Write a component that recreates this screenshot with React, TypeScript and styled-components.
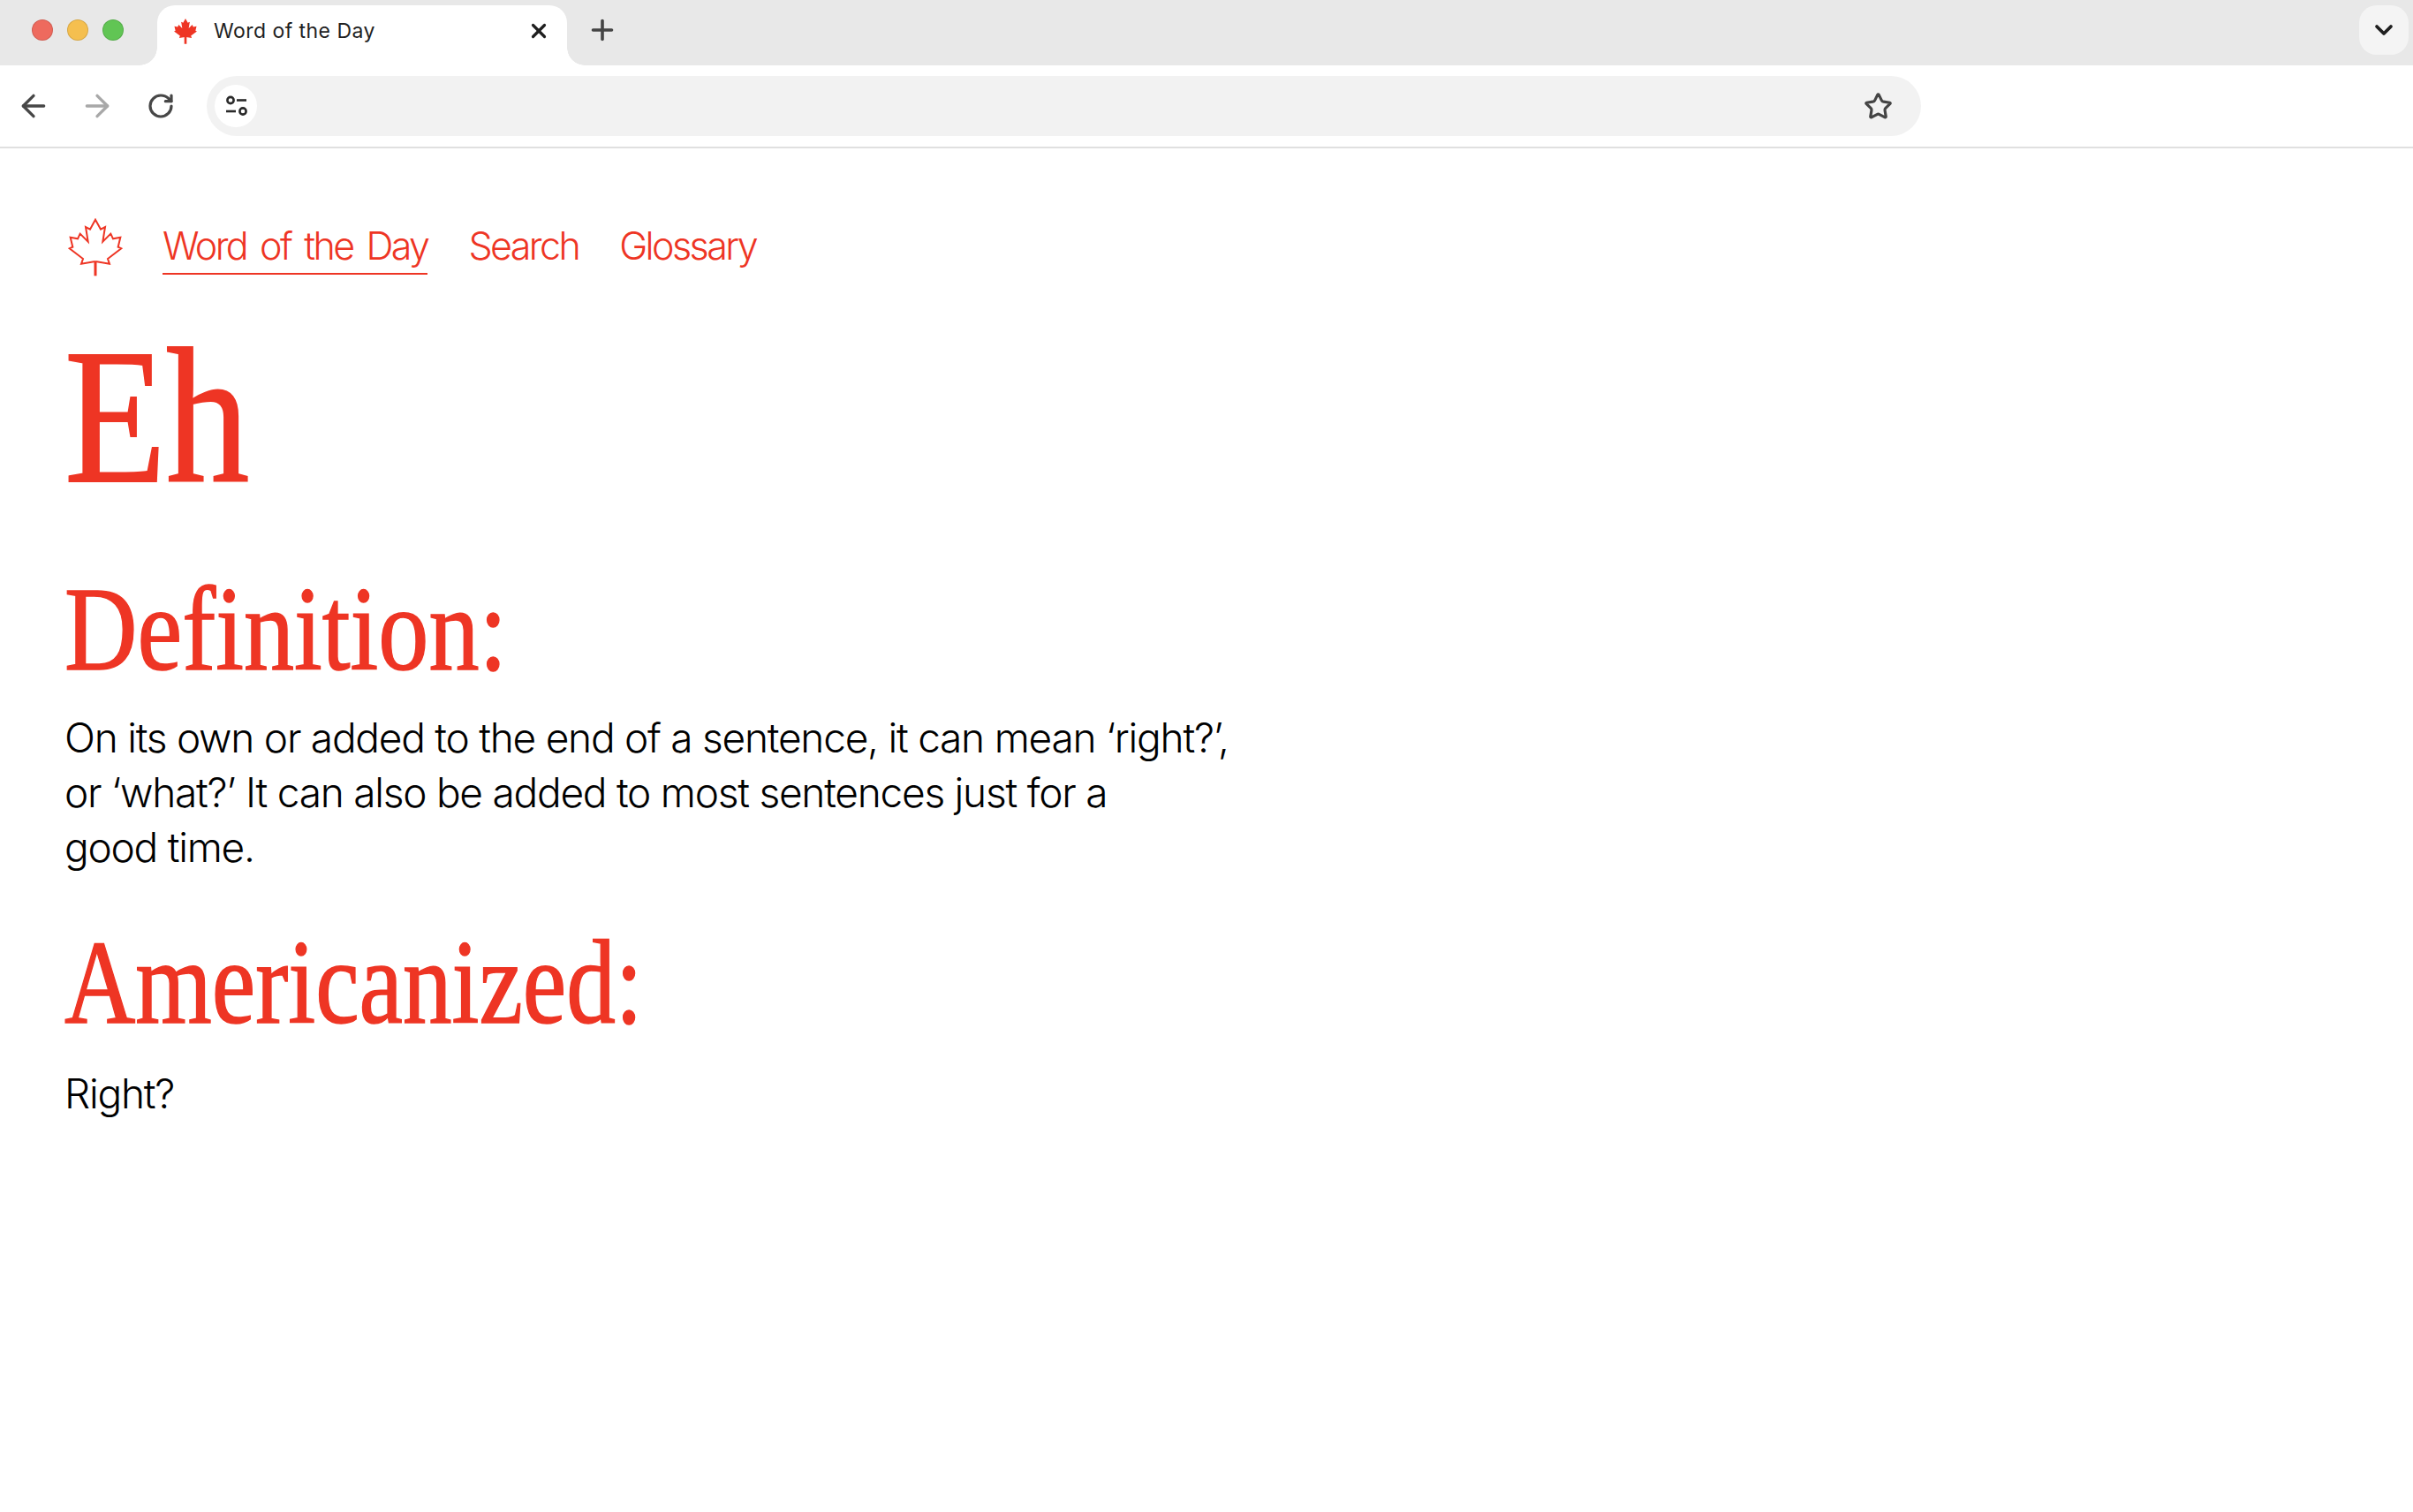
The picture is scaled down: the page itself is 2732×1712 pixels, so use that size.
import { createGlobalStyle, styled } from "styled-components";
import { ArrowLeft, ArrowRight, ChevronDown, Plus, RotateCw, Star, X } from "lucide-react";

const RED = "#ee3524";

const GlobalStyle = createGlobalStyle`
  html, body {
    background: #fff;
    margin: 0;
    padding: 0;
  }
  body {
    font-family: "Inter", "Liberation Sans", sans-serif;
  }
`;

const Page = styled.div`
  display: flex;
  flex-direction: column;
  height: 1712px;
  overflow: hidden;
  width: 2732px;
`;

const TabStrip = styled.div`
  align-items: flex-end;
  background: #e8e8e8;
  display: flex;
  height: 74px;
  padding-left: 36px;
`;

const Lights = styled.div`
  align-self: center;
  display: flex;
  gap: 16px;
  margin-bottom: 6px;
  width: 142px;
`;

const Light = styled.span<{ $color: string }>`
  background: ${({ $color }) => $color};
  border: 1px solid rgba(0, 0, 0, 0.12);
  border-radius: 50%;
  box-sizing: border-box;
  height: 24px;
  width: 24px;
`;

const Tab = styled.div`
  align-items: center;
  background: #fff;
  border-radius: 20px 20px 0 0;
  box-sizing: border-box;
  display: flex;
  height: 68px;
  padding: 0 19px 10px 18px;
  position: relative;
  width: 464px;

  &::before,
  &::after {
    bottom: 0;
    content: "";
    height: 20px;
    position: absolute;
    width: 20px;
  }
  &::before {
    background: radial-gradient(circle at 0 0, #e8e8e8 19.5px, #fff 20px);
    left: -20px;
  }
  &::after {
    background: radial-gradient(circle at 100% 0, #e8e8e8 19.5px, #fff 20px);
    right: -20px;
  }
`;

const TabTitle = styled.span`
  color: #1f1f1f;
  flex: 1;
  font-family: "Inter", sans-serif;
  font-size: 23px;
  letter-spacing: 0.02em;
  margin-left: 18px;
`;

const NewTab = styled.span`
  align-items: center;
  align-self: center;
  color: #444;
  display: flex;
  margin-bottom: 6px;
  margin-left: 22px;
`;

const TabListButton = styled.span`
  align-items: center;
  align-self: center;
  background: #f4f4f4;
  border-radius: 20px;
  color: #1f1f1f;
  display: flex;
  height: 56px;
  justify-content: center;
  margin-bottom: 6px;
  margin-left: auto;
  margin-right: 5px;
  width: 56px;
`;

const Toolbar = styled.div`
  align-items: center;
  background: #fff;
  border-bottom: 2px solid #e0e0e0;
  border-radius: 12px 12px 0 0;
  box-sizing: border-box;
  display: flex;
  height: 94px;
  padding-left: 18px;
`;

const NavIcon = styled.span<{ $muted?: boolean }>`
  align-items: center;
  color: ${({ $muted }) => ($muted ? "#a8a8a8" : "#474747")};
  display: flex;
  justify-content: center;
  margin-right: 32px;
  width: 40px;
`;

const AddressBar = styled.div`
  align-items: center;
  background: #f2f2f2;
  border-radius: 34px;
  box-sizing: border-box;
  display: flex;
  height: 68px;
  justify-content: space-between;
  padding: 0 32px 0 9px;
  width: 1941px;
`;

const SiteButton = styled.span`
  align-items: center;
  background: #fff;
  border-radius: 50%;
  display: flex;
  height: 48px;
  justify-content: center;
  width: 48px;
`;

const Main = styled.main`
  padding: 79px 0 0 73px;
`;

const Header = styled.header`
  align-items: flex-start;
  display: flex;
  gap: 46px;
`;

const Logo = styled.svg`
  display: block;
  height: 66px;
  margin-left: 4px;
  margin-right: -1px;
  width: 62px;
`;

const NavLink = styled.a<{ $active?: boolean }>`
  border-bottom: 2px solid ${({ $active }) => ($active ? RED : "transparent")};
  color: ${RED};
  font-family: "Inter", sans-serif;
  font-size: 43px;
  font-weight: 300;
  letter-spacing: -0.06em;
  line-height: 56px;
  margin-top: 3px;
  padding-bottom: 3px;
  white-space: nowrap;
  word-spacing: 5.4px;
`;

const Title = styled.h1`
  color: ${RED};
  font-family: "Liberation Serif", serif;
  font-size: 219px;
  font-weight: 400;
  line-height: 220px;
  margin: 48px 0 0;
  transform: scaleX(0.86);
  transform-origin: left;
  -webkit-text-stroke: 2px ${RED};
`;

const Heading = styled.h2<{ $top: number; $squeeze: number }>`
  color: ${RED};
  font-family: "Liberation Serif", serif;
  font-size: 136px;
  font-weight: 400;
  line-height: 140px;
  margin: ${({ $top }) => $top}px 0 0;
  transform: scaleX(${({ $squeeze }) => $squeeze});
  transform-origin: left;
  -webkit-text-stroke: 1.5px ${RED};
`;

const Body = styled.p<{ $top: number }>`
  color: #000;
  font-family: "Inter", sans-serif;
  font-size: 46px;
  font-weight: 300;
  letter-spacing: -0.027em;
  line-height: 62px;
  margin: ${({ $top }) => $top}px 0 0;
`;

const LEAF =
  "M145 55 L163 88 L178 80 L170 130 L197 103 L205 120 L230 115 L222 148 L233 153 L187 188 L193 205 L150 198 L140 198 L97 205 L103 188 L57 153 L68 148 L60 115 L85 120 L93 103 L120 130 L112 80 L127 88 Z";

function App() {
  return (
    <Page>
      <GlobalStyle />
      <TabStrip>
        <Lights>
          <Light $color="#ee6a5e" />
          <Light $color="#f5bf4f" />
          <Light $color="#61c554" />
        </Lights>
        <Tab>
          <svg width="28" height="30" viewBox="50 50 190 200">
            <path d={LEAF} fill={RED} />
            <rect x="136" y="190" width="18" height="60" fill={RED} />
          </svg>
          <TabTitle>Word of the Day</TabTitle>
          <X size={26} strokeWidth={3} color="#1f1f1f" />
        </Tab>
        <NewTab>
          <Plus size={36} strokeWidth={2.4} />
        </NewTab>
        <TabListButton>
          <ChevronDown size={32} strokeWidth={2.8} />
        </TabListButton>
      </TabStrip>
      <Toolbar>
        <NavIcon>
          <ArrowLeft size={40} strokeWidth={2} />
        </NavIcon>
        <NavIcon $muted>
          <ArrowRight size={40} strokeWidth={2} />
        </NavIcon>
        <NavIcon>
          <RotateCw size={32} strokeWidth={2.4} />
        </NavIcon>
        <AddressBar>
          <SiteButton>
            <svg width="28" height="28" viewBox="-1 0 28 28" fill="none" stroke="#2a2a2a" strokeWidth="2.6">
              <circle cx="7" cy="7.5" r="3.6" />
              <path d="M14 7.5 H25" />
              <path d="M2 20 H13" />
              <circle cx="21" cy="20" r="3.6" />
            </svg>
          </SiteButton>
          <Star size={33} strokeWidth={2.3} color="#444" />
        </AddressBar>
      </Toolbar>
      <Main>
        <Header>
          <Logo viewBox="52 50 186 198">
            <path d={LEAF} fill="none" stroke={RED} strokeWidth="6" />
            <path d="M145 198 V246" fill="none" stroke={RED} strokeWidth="9" />
          </Logo>
          <NavLink $active>Word of the Day</NavLink>
          <NavLink>Search</NavLink>
          <NavLink>Glossary</NavLink>
        </Header>
        <Title>Eh</Title>
        <Heading $top={61} $squeeze={0.84}>Definition:</Heading>
        <Body $top={22}>
          On its own or added to the end of a sentence, it can mean ‘right?’,
          <br />
          or ‘what?’ It can also be added to most sentences just for a
          <br />
          good time.
        </Body>
        <Heading $top={52} $squeeze={0.818}>Americanized:</Heading>
        <Body $top={25}>Right?</Body>
      </Main>
    </Page>
  );
}

export default App;
